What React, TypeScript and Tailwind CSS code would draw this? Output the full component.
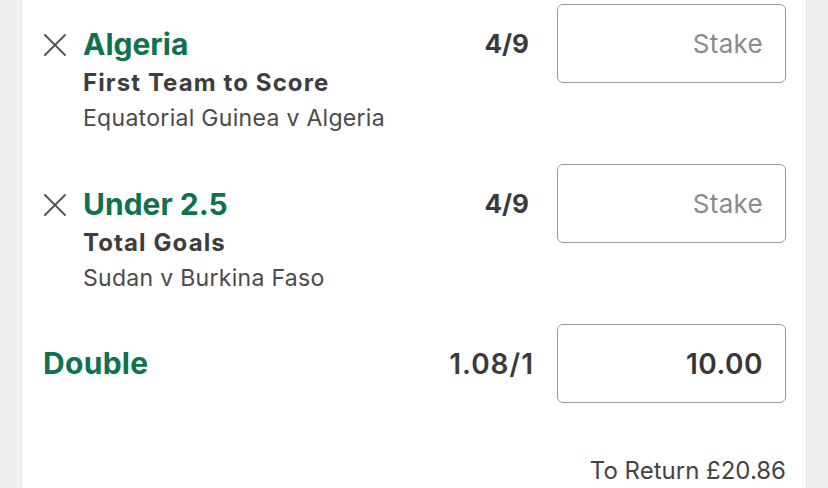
import React from "react";

const GREEN = "#0f7150";

type Selection = {
  name: string;
  market: string;
  event: string;
  odds: string;
};

const selections: Selection[] = [
  { name: "Algeria", market: "First Team to Score", event: "Equatorial Guinea v Algeria", odds: "4/9" },
  { name: "Under 2.5", market: "Total Goals", event: "Sudan v Burkina Faso", odds: "4/9" },
];

function CloseIcon() {
  return (
    <svg width="24" height="24" viewBox="0 0 24 24" fill="none" stroke="#555555" strokeWidth="2" strokeLinecap="round">
      <line x1="2" y1="2" x2="22" y2="22" />
      <line x1="22" y1="2" x2="2" y2="22" />
    </svg>
  );
}

function StakeBox({ value }: { value?: string }) {
  return (
    <div className="w-[229px] h-[79px] shrink-0 rounded-[6px] border-[1.5px] border-[#9a9a9a] flex items-center justify-end pr-[22px]">
      {value ? (
        <span className="text-[28px] font-semibold text-[#363636] tracking-[0.5px]">{value}</span>
      ) : (
        <span className="text-[26px] text-[#8a8a8a] tracking-[0.3px]">Stake</span>
      )}
    </div>
  );
}

function SelectionRow({ sel }: { sel: Selection }) {
  return (
    <div className="h-[160px] pt-[4px] flex">
      <div className="w-[40px] shrink-0 pt-[29px]">
        <CloseIcon />
      </div>
      <div className="flex-1 pt-[22px]">
        <div className="text-[30px] leading-[36px] font-bold" style={{ color: GREEN }}>
          {sel.name}
        </div>
        <div className="mt-[6px] text-[24px] leading-[30px] font-bold text-[#3d3d3d] tracking-[1.1px]">
          {sel.market}
        </div>
        <div className="mt-[5px] text-[23px] leading-[30px] text-[#4a4a4a] tracking-[0.3px]">
          {sel.event}
        </div>
      </div>
      <div className="flex items-start">
        <div className="h-[79px] flex items-center mr-[28px] text-[26px] font-bold text-[#3a3a3a]">
          {sel.odds}
        </div>
        <StakeBox />
      </div>
    </div>
  );
}

export default function App() {
  return (
    <div className="h-[488px] w-full overflow-hidden bg-[#efefef] font-['Inter','Liberation_Sans',sans-serif]">
      <div className="mx-[21px] h-full bg-white border-x border-[#e2e2e2] pl-[21px] pr-[20px]">
        {selections.map((s) => (
          <SelectionRow key={s.name} sel={s} />
        ))}
        <div className="pt-[4px] flex items-center">
          <div className="flex-1 text-[30px] font-bold tracking-[0.3px]" style={{ color: GREEN }}>
            Double
          </div>
          <div className="mr-[23px] text-[28px] font-semibold text-[#3a3a3a] tracking-[1px]">1.08/1</div>
          <StakeBox value="10.00" />
        </div>
        <div className="mt-[50px] text-right text-[24px] text-[#444444]">To Return £20.86</div>
      </div>
    </div>
  );
}
